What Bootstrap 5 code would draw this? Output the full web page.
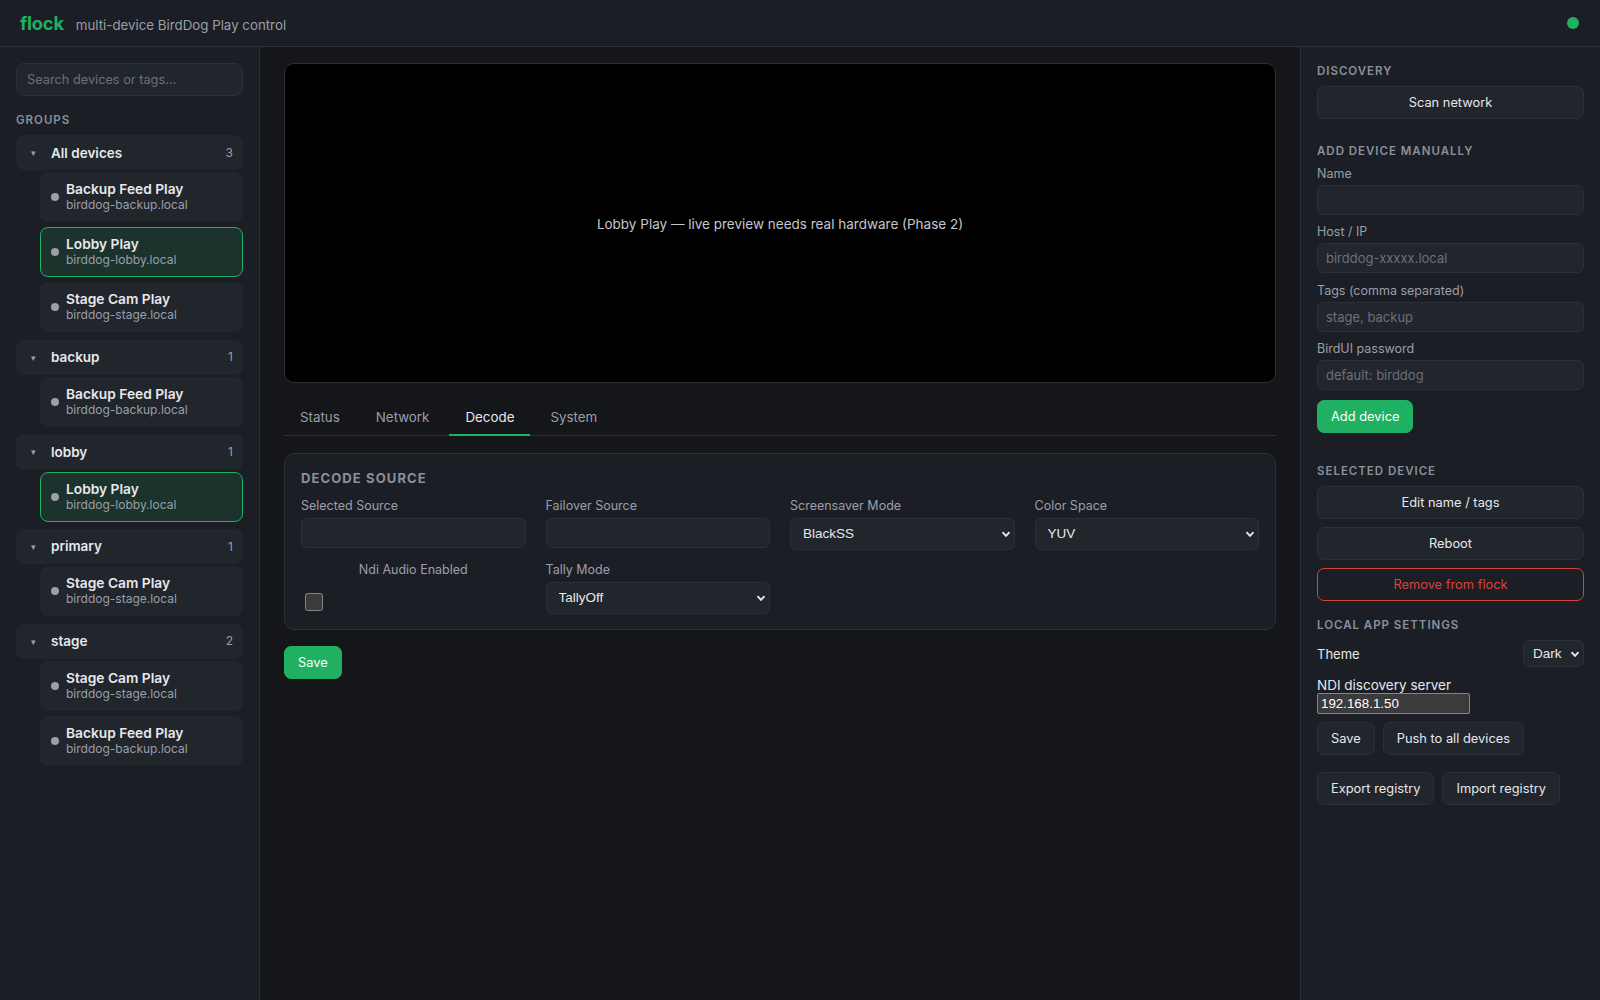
<!DOCTYPE html>
<html lang="en">
<head>
<meta charset="utf-8">
<title>flock</title>
<link href="https://cdn.jsdelivr.net/npm/bootstrap@5.3.0/dist/css/bootstrap.min.css" rel="stylesheet">
<style>
html,body{height:100%}
body{background:#14161a;color:#e6e8eb;font-family:Inter,"Liberation Sans",sans-serif;font-size:13px;color-scheme:dark;overflow:hidden}
.fl-top{height:47px;background:#1b1e25;border-bottom:1px solid #2d3038;padding:0 20px}
.fl-brand{color:#20b062;font-weight:700;font-size:18.3px;letter-spacing:-.2px;margin-right:12px;margin-top:2px}
.fl-tag{color:#9a9fa9;font-size:13.3px;margin-top:6px}
.fl-live{width:12px;height:12px;border-radius:50%;background:#20b062;margin-right:1px}
.fl-shell{height:953px}
.fl-side{width:260px;background:#1b1e25;border-right:1px solid #2d3038;padding:16px;flex:none}
.fl-right{width:300px;background:#1b1e25;border-left:1px solid #2d3038;padding:16px;flex:none}
.fl-main{flex:1;min-width:0;padding:16px 24px}
.fl-head{font-size:11.5px;font-weight:600;letter-spacing:.085em;text-transform:uppercase;color:#8b909b;line-height:16px}
.form-control.fl-in,.form-select.fl-in{background-color:#21252c;border:1px solid #2d3038;color:#e6e8eb;font-size:13px;border-radius:6px;padding:6px 8px;line-height:16px;height:30px}
.form-control.fl-in::placeholder{color:#6c7079;opacity:1}
.form-control.fl-search{height:33px;padding:6px 10px;border-radius:8px;font-size:12.75px}
.form-select.fl-in{height:31.5px;padding:6px 26px 6px 12px;font-family:"Liberation Sans",Arial,sans-serif;font-size:13.5px;background-image:url("data:image/svg+xml,%3Csvg xmlns='http://www.w3.org/2000/svg' viewBox='0 0 10 10'%3E%3Cpath d='M1.5 3.2 5 6.8l3.5-3.6' fill='none' stroke='%23e6e8eb' stroke-width='1.9'/%3E%3C/svg%3E");background-size:10px 10px;background-position:right 3px center}
.fl-group{margin-bottom:7.3px}
.fl-grp{background:#21252c;border-radius:8px;height:35.33px;padding:0 10px 0 15px;margin-bottom:2px}
.fl-caret{font-size:9px;color:#9a9fa9;width:20px;line-height:1}
.fl-gname{font-weight:600;font-size:13.5px;flex:1}
.fl-count{font-size:12px;color:#9a9fa9}
.fl-devs{margin-left:24px;gap:5px}
.fl-dev{height:50px;background:#21252c;border:1px solid transparent;border-radius:8px;padding:1px 10px 0}
.fl-dev.fl-sel{background:#1c332d;border-color:#20b062}
.fl-dot{width:8px;height:8px;border-radius:50%;background:#9a9fa9;margin-right:7px;margin-top:-1px;flex:none}
.fl-dname{font-weight:600;font-size:13.75px;line-height:15px}
.fl-dhost{font-size:12px;color:#9a9fa9;line-height:16px}
.fl-video{height:320px;background:#000;border:1px solid #2d3038;border-radius:10px;color:#c4c7cd;font-size:13.5px;padding-top:2px}
.fl-tabs{border-bottom:1px solid #2d3038;margin-top:16px;gap:4px;height:37px}
.fl-tab{padding:0 16px;color:#9a9fa9;font-size:13.35px;line-height:37px;height:37px;border-bottom:2px solid transparent;margin-bottom:-1px}
.fl-tab.fl-on{color:#e6e8eb;border-bottom-color:#20b062}
.fl-card{background:#1b1e25;border:1px solid #2d3038;border-radius:10px;padding:16px 16px 15px;margin-top:17px}
.fl-ctitle{font-size:13px;font-weight:700;letter-spacing:.085em;text-transform:uppercase;color:#8b909b;line-height:16px;margin-bottom:11px}
.fl-grid{display:grid;grid-template-columns:repeat(4,1fr);gap:11.5px 20px}
.fl-lbl{display:block;color:#9a9fa9;font-size:12.5px;line-height:16px;padding-top:1px;margin-bottom:4px}
.fl-chk{width:18px;height:18px;margin:15px 0 0 4px;display:block}
.btn.fl-go,.btn.fl-btn,.btn.fl-red{font-size:12.85px;font-weight:400;border-radius:7px;padding:0 13px;height:33px;line-height:31px}
.btn.fl-go{background:#20b062;border:1px solid #20b062;color:#fff}
.btn.fl-btn{background:#21252c;border:1px solid #2d3038;color:#e6e8eb}
.btn.fl-red{background:transparent;border:1px solid #d8423a;color:#d8423a}
.fl-rlbl{display:block;color:#9a9fa9;font-size:12.5px;line-height:16px;padding-top:1px;margin-bottom:3px}
.fl-ndi-l{font-size:13.5px;color:#e6e8eb;line-height:16px;display:block}
.fl-ndi{display:block;width:153px;height:21px;font:13.33px "Liberation Sans",Arial,sans-serif;background:#3b3b3b;color:#fff;border:1px solid #858585;border-radius:2px;padding:1px 3px}
.form-select.fl-theme{width:61px;height:27px;padding:4px 20px 4px 9px;font-size:13.5px}
.fl-theme-l{margin-top:2px}
.fl-field{margin-bottom:8.4px}
</style>
</head>
<body>
<header class="fl-top d-flex align-items-center">
  <span class="fl-brand">flock</span>
  <span class="fl-tag">multi-device BirdDog Play control</span>
  <span class="fl-live ms-auto"></span>
</header>
<div class="fl-shell d-flex">
  <aside class="fl-side">
    <input class="form-control fl-in fl-search mb-3" placeholder="Search devices or tags…">
    <div class="fl-head" style="margin-bottom:7px">Groups</div>

    <div class="fl-group">
      <div class="fl-grp d-flex align-items-center"><span class="fl-caret">▾</span><span class="fl-gname">All devices</span><span class="fl-count">3</span></div>
      <div class="fl-devs d-flex flex-column">
        <div class="fl-dev d-flex align-items-center"><span class="fl-dot"></span><div><div class="fl-dname">Backup Feed Play</div><div class="fl-dhost">birddog-backup.local</div></div></div>
        <div class="fl-dev fl-sel d-flex align-items-center"><span class="fl-dot"></span><div><div class="fl-dname">Lobby Play</div><div class="fl-dhost">birddog-lobby.local</div></div></div>
        <div class="fl-dev d-flex align-items-center"><span class="fl-dot"></span><div><div class="fl-dname">Stage Cam Play</div><div class="fl-dhost">birddog-stage.local</div></div></div>
      </div>
    </div>
    <div class="fl-group">
      <div class="fl-grp d-flex align-items-center"><span class="fl-caret">▾</span><span class="fl-gname">backup</span><span class="fl-count">1</span></div>
      <div class="fl-devs d-flex flex-column">
        <div class="fl-dev d-flex align-items-center"><span class="fl-dot"></span><div><div class="fl-dname">Backup Feed Play</div><div class="fl-dhost">birddog-backup.local</div></div></div>
      </div>
    </div>
    <div class="fl-group">
      <div class="fl-grp d-flex align-items-center"><span class="fl-caret">▾</span><span class="fl-gname">lobby</span><span class="fl-count">1</span></div>
      <div class="fl-devs d-flex flex-column">
        <div class="fl-dev fl-sel d-flex align-items-center"><span class="fl-dot"></span><div><div class="fl-dname">Lobby Play</div><div class="fl-dhost">birddog-lobby.local</div></div></div>
      </div>
    </div>
    <div class="fl-group">
      <div class="fl-grp d-flex align-items-center"><span class="fl-caret">▾</span><span class="fl-gname">primary</span><span class="fl-count">1</span></div>
      <div class="fl-devs d-flex flex-column">
        <div class="fl-dev d-flex align-items-center"><span class="fl-dot"></span><div><div class="fl-dname">Stage Cam Play</div><div class="fl-dhost">birddog-stage.local</div></div></div>
      </div>
    </div>
    <div class="fl-group">
      <div class="fl-grp d-flex align-items-center"><span class="fl-caret">▾</span><span class="fl-gname">stage</span><span class="fl-count">2</span></div>
      <div class="fl-devs d-flex flex-column">
        <div class="fl-dev d-flex align-items-center"><span class="fl-dot"></span><div><div class="fl-dname">Stage Cam Play</div><div class="fl-dhost">birddog-stage.local</div></div></div>
        <div class="fl-dev d-flex align-items-center"><span class="fl-dot"></span><div><div class="fl-dname">Backup Feed Play</div><div class="fl-dhost">birddog-backup.local</div></div></div>
      </div>
    </div>
  </aside>

  <main class="fl-main">
    <div class="fl-video d-flex align-items-center justify-content-center">Lobby Play — live preview needs real hardware (Phase 2)</div>
    <div class="fl-tabs d-flex">
      <div class="fl-tab">Status</div>
      <div class="fl-tab">Network</div>
      <div class="fl-tab fl-on">Decode</div>
      <div class="fl-tab">System</div>
    </div>
    <section class="fl-card">
      <div class="fl-ctitle">Decode source</div>
      <div class="fl-grid">
        <div><label class="fl-lbl">Selected Source</label><input class="form-control fl-in"></div>
        <div><label class="fl-lbl">Failover Source</label><input class="form-control fl-in"></div>
        <div><label class="fl-lbl">Screensaver Mode</label><select class="form-select fl-in"><option>BlackSS</option></select></div>
        <div><label class="fl-lbl">Color Space</label><select class="form-select fl-in"><option>YUV</option></select></div>
        <div><label class="fl-lbl text-center">Ndi Audio Enabled</label><input type="checkbox" class="fl-chk"></div>
        <div><label class="fl-lbl">Tally Mode</label><select class="form-select fl-in"><option>TallyOff</option></select></div>
      </div>
    </section>
    <button class="btn fl-go" style="margin-top:16px">Save</button>
  </main>

  <aside class="fl-right">
    <div class="fl-head" style="margin-bottom:7px">Discovery</div>
    <button class="btn fl-btn w-100">Scan network</button>
    <div class="fl-head" style="margin:24px 0 6px">Add device manually</div>
    <div class="fl-field"><label class="fl-rlbl">Name</label><input class="form-control fl-in"></div>
    <div class="fl-field"><label class="fl-rlbl">Host / IP</label><input class="form-control fl-in" placeholder="birddog-xxxxx.local"></div>
    <div class="fl-field"><label class="fl-rlbl">Tags (comma separated)</label><input class="form-control fl-in" placeholder="stage, backup"></div>
    <div style="margin-bottom:10px"><label class="fl-rlbl">BirdUI password</label><input class="form-control fl-in" placeholder="default: birddog"></div>
    <button class="btn fl-go">Add device</button>
    <div class="fl-head" style="margin:30px 0 7px">Selected device</div>
    <button class="btn fl-btn w-100" style="margin-bottom:8px">Edit name / tags</button>
    <button class="btn fl-btn w-100" style="margin-bottom:8px">Reboot</button>
    <button class="btn fl-red w-100">Remove from flock</button>
    <div class="fl-head" style="margin:16px 0 7px">Local app settings</div>
    <div class="d-flex align-items-center justify-content-between"><span class="fl-theme-l">Theme</span><select class="form-select fl-in fl-theme"><option>Dark</option></select></div>
    <label class="fl-ndi-l" style="margin-top:10px">NDI discovery server</label>
    <input class="fl-ndi" value="192.168.1.50">
    <div class="d-flex gap-2" style="margin-top:8px"><button class="btn fl-btn">Save</button><button class="btn fl-btn">Push to all devices</button></div>
    <div class="d-flex gap-2" style="margin-top:16.4px"><button class="btn fl-btn">Export registry</button><button class="btn fl-btn">Import registry</button></div>
  </aside>
</div>
<script src="https://cdn.jsdelivr.net/npm/bootstrap@5.3.0/dist/js/bootstrap.bundle.min.js"></script>
</body>
</html>
